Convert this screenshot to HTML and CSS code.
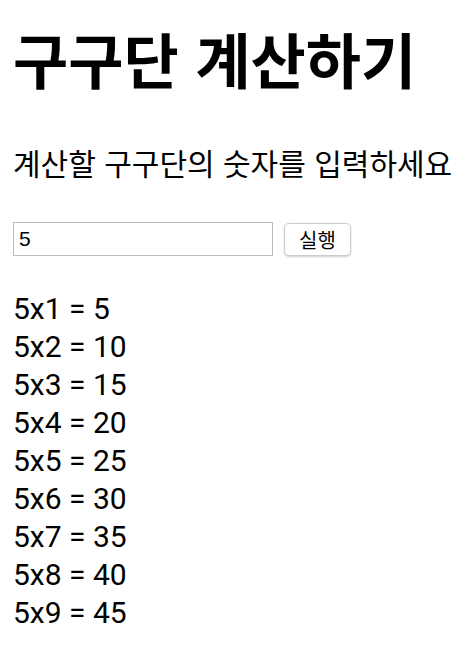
FILE: index.html
```html
<!DOCTYPE html>
<html lang="ko">
<head>
<meta charset="utf-8">
<link rel="stylesheet" href="styles.css">
</head>
<body>
<h1 class="title">구구단 계산하기</h1>
<p class="prompt">계산할 구구단의 숫자를 입력하세요</p>
<div class="form">
  <input class="num" type="text" value="5">
  <button class="run">실행</button>
</div>
<div class="result">
  <div>5x1 = 5</div>
  <div>5x2 = 10</div>
  <div>5x3 = 15</div>
  <div>5x4 = 20</div>
  <div>5x5 = 25</div>
  <div>5x6 = 30</div>
  <div>5x7 = 35</div>
  <div>5x8 = 40</div>
  <div>5x9 = 45</div>
</div>
</body>
</html>
```
FILE: styles.css
```css
html, body {
  margin: 0;
  background: #fff;
}
body {
  padding: 0 13px;
  font-family: "Noto Sans CJK KR", "Noto Sans", sans-serif;
  color: #000;
}
.title {
  margin: 18px 0 0;
  font-size: 60px;
  font-weight: 700;
  line-height: 80px;
  white-space: nowrap;
}
.prompt {
  margin: 44px 0 0;
  font-size: 30px;
  line-height: 40px;
  white-space: nowrap;
}
.form {
  margin-top: 40px;
  display: flex;
  align-items: center;
  gap: 11px;
}
.num {
  width: 260px;
  height: 34px;
  box-sizing: border-box;
  border: 1px solid #bbb;
  padding: 0 5px;
  font-family: "Liberation Sans", Arial, sans-serif;
  font-size: 21px;
  margin: 0;
}
.run {
  height: 33px;
  width: 67px;
  box-sizing: border-box;
  border: 1px solid #ccc;
  border-radius: 5px;
  background: #fff;
  box-shadow: 0 1px 2px rgba(0,0,0,0.2);
  font-family: "Noto Sans CJK KR", sans-serif;
  font-size: 20px;
  padding: 0;
  margin: 0;
}
.result {
  margin-top: 34px;
  font-family: Roboto, "Noto Sans CJK KR", sans-serif;
  font-size: 30px;
  line-height: 38px;
}
```
